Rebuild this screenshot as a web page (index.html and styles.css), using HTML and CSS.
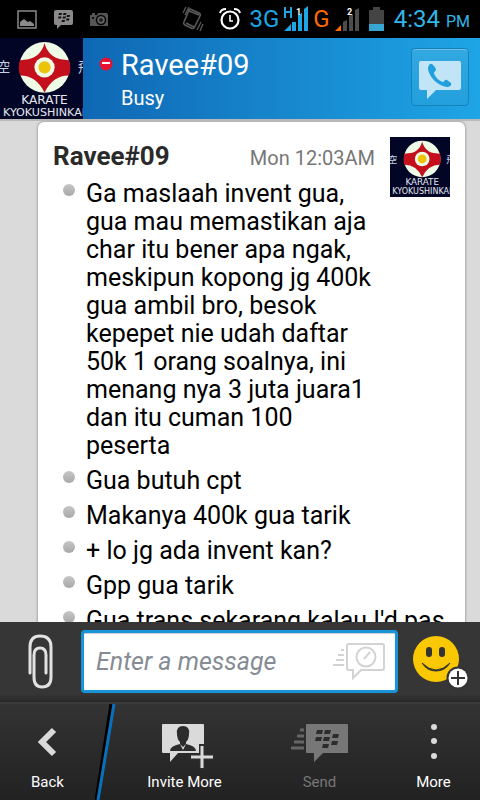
FILE: index.html
```html
<!DOCTYPE html>
<html lang="id">
<head>
    <meta charset="UTF-8">
    <meta name="viewport" content="width=device-width, initial-scale=1.0">
    <title>Ravee#09</title>
    <link rel="stylesheet" href="styles.css">
</head>
<body>
    <!-- avatar, used in the header and in the chat -->
    <svg class="defs" width="0" height="0" aria-hidden="true">
        <symbol id="avatar" viewBox="0 0 82 82" preserveAspectRatio="xMidYMid slice">
            <rect width="82" height="82" fill="#030527"/>
            <circle cx="44" cy="30" r="25" fill="#eefbe6"/>
            <path d="M44 6C46 15 53 21 60 22L68 23Q71 30 68 38Q52 38 44 55Q36 38 20 38Q17 30 20 23L28 22C35 21 42 15 44 6Z" fill="#c4101c"/>
            <circle cx="44" cy="30" r="10" fill="#eefbe6"/>
            <circle cx="44" cy="30" r="6" fill="#ecc308"/>
            <text class="kanji" x="-3" y="35">空</text>
            <text class="kanji" x="77" y="35">飛</text>
            <text class="mark" x="44" y="66" font-size="12" text-anchor="middle">KARATE</text>
            <text class="mark" x="3" y="78" font-size="11">KYOKUSHINKAI</text>
        </symbol>
    </svg>

    <div class="status-bar">
        <div class="status-left">
            <svg width="20" height="19" viewBox="0 0 20 19">
                <rect x="1" y="1" width="18" height="17" fill="none" stroke="#8b8989" stroke-width="1.5"/>
                <path d="M3 16V12L7 9L11 12L13 11L17 14V16Z" fill="#8b8989"/>
            </svg>
            <svg width="19" height="19" viewBox="0 0 19 19">
                <path d="M2 0H17Q19 0 19 2V13Q19 15 17 15H7L3 19V15H2Q0 15 0 13V2Q0 0 2 0Z" fill="#8b8989"/>
                <path d="M5 3h3l-.5 2h-3zM9.500 3h3l-.5 2h-3zM4.500 6.500h3l-.5 2h-3zM9 6.500h3l-.5 2h-3zM13 5h3l-.5 2h-3zM12.500 8.500h3l-.5 2h-3zM8 10h3l-.5 2h-3z" fill="#111"/>
            </svg>
            <svg width="18" height="19" viewBox="0 0 18 19">
                <path d="M0 5H2V3H5V5H7L8 3H17L18 5V16H0Z" fill="#555"/>
                <circle cx="11" cy="10" r="4.500" fill="#666" stroke="#050505" stroke-width="1.500"/>
                <circle cx="11" cy="10" r="2" fill="#222"/>
                <rect x="2" y="7" width="2" height="2" fill="#111"/>
            </svg>
        </div>
        <div class="status-right">
            <svg class="vibrate" width="22" height="26" viewBox="0 0 22 26" fill="none" stroke="#5a5a5a">
                <path d="M8 3L17 7Q19 8 18 10L12 22Q11 23 9 22L3 19Q1 18 2 16L7 4Q7 3 8 3ZM7 5L17 9M4 17L12 21" stroke-width="1.600"/>
                <path d="M4 1L1 7M7 1L3 9M19 16L15 24M21 18L18 25" stroke-width="1.300"/>
            </svg>
            <svg class="alarm" width="22" height="24" viewBox="0 0 22 24" fill="none" stroke="#fff">
                <circle cx="11" cy="13" r="8.500" stroke-width="2.200"/>
                <path d="M11 8V14H14" stroke-width="1.600"/>
                <path d="M1 6Q2 2 7 2M15 2Q20 2 21 6" stroke-width="2"/>
            </svg>
            <span class="net net-blue">3G</span>
            <svg class="signal" width="24" height="26" viewBox="0 0 24 26" fill="#1ea6e4">
                <path d="M0 26L7 19V26ZM8 17H12V26H8ZM14 10L18 8V26H14ZM20 4L24 1V26H20Z"/>
                <path d="M0 2H2V6H6V2H8V13H6V8H2V13H0Z"/>
                <text class="sim" x="12" y="10" font-size="9">1</text>
            </svg>
            <span class="net net-orange">G</span>
            <svg class="signal" width="24" height="26" viewBox="0 0 24 26">
                <path d="M0 26L6 20V26Z" fill="#ff6a00"/>
                <path d="M8 17L12 15V26H8ZM14 11L18 9V26H14ZM20 5L24 3V26H20Z" fill="#4d4d4d"/>
                <text class="sim" x="12" y="10" font-size="9">2</text>
            </svg>
            <svg class="battery" width="15" height="24" viewBox="0 0 15 24">
                <path d="M0 3H4V0H11V3H15V24H0Z" fill="#444"/>
                <rect y="17" width="15" height="7" fill="#37a6d0"/>
            </svg>
            <span class="clock">4:34 <small>PM</small></span>
        </div>
    </div>

    <header class="header">
        <svg class="header-avatar"><use href="#avatar"/></svg>
        <svg class="busy" width="14" height="14" viewBox="0 0 14 14">
            <circle cx="7" cy="7" r="6.500" fill="#e5132f"/>
            <rect x="3" y="5" width="8" height="2" fill="#fff"/>
        </svg>
        <div class="contact">
            <h1>Ravee#09</h1>
            <p>Busy</p>
        </div>
        <button class="call-btn" aria-label="Call">
            <svg width="42" height="38" viewBox="0 0 42 38">
                <path d="M2 0H40Q42 0 42 2V27Q42 29 40 29H17L8 38V29H2Q0 29 0 27V2Q0 0 2 0Z" fill="#c1e5f7"/>
                <path d="M11 3C13 2 15 5 17 8C17 10 15 11 15 12C16 16 20 20 24 21C26 20 26 18 28 19L32 22C33 24 31 26 28 26C19 25 10 16 9 8C9 5 10 4 11 3Z" fill="#229fdd"/>
            </svg>
        </button>
    </header>

    <main class="chat">
        <article class="bubble">
            <div class="bubble-head">
                <h2>Ravee#09</h2>
                <time>Mon 12:03AM</time>
                <svg class="bubble-avatar"><use href="#avatar"/></svg>
            </div>
            <ul class="messages">
                <li class="narrow">Ga maslaah invent gua, gua mau memastikan aja char itu bener apa ngak, meskipun kopong jg 400k gua ambil bro, besok kepepet nie udah daftar 50k 1 orang soalnya, ini menang nya 3 juta juara1 dan itu cuman 100 peserta</li>
                <li>Gua butuh cpt</li>
                <li>Makanya 400k gua tarik</li>
                <li>+ lo jg ada invent kan?</li>
                <li>Gpp gua tarik</li>
                <li>Gua trans sekarang kalau I'd pas</li>
            </ul>
        </article>
    </main>

    <form class="composer">
        <button type="button" class="attach" aria-label="Attach">
            <svg width="26" height="56" viewBox="0 0 26 56" fill="none" stroke="#e2e2e2" stroke-width="3" stroke-linecap="round">
                <path d="M3 39V13Q3 2 13 2Q24 2 24 13V43Q24 53 15 53Q7 53 7 43V21Q7 14 13 14Q19 14 19 21V39"/>
            </svg>
        </button>
        <div class="field">
            <input type="text" placeholder="Enter a message" aria-label="Message">
            <button type="button" class="timer" aria-label="Timed message">
                <svg width="52" height="37" viewBox="0 0 52 37" fill="none" stroke="#d3d3d3" stroke-width="2">
                    <path d="M16 1H49Q51 1 51 3V25Q51 27 49 27H28L20 35V27H16Q14 27 14 25V3Q14 1 16 1Z"/>
                    <circle cx="33" cy="14" r="9.500"/>
                    <path d="M31 16L37 9M8 7H11M5 12H11M3 17H11M0 22H11"/>
                </svg>
            </button>
        </div>
        <button type="button" class="smiley" aria-label="Smileys">
            <svg width="56" height="56" viewBox="0 0 56 56">
                <circle cx="24" cy="25" r="23" fill="#fac800"/>
                <rect x="14" y="13" width="6" height="10" rx="3" fill="#333"/>
                <rect x="27" y="13" width="6" height="10" rx="3" fill="#333"/>
                <path d="M10 29Q24 43 38 29Q33 37 24 37Q15 37 10 29Z" fill="#333" stroke="#333"/>
                <circle cx="46" cy="44" r="11.500" fill="#333"/>
                <circle cx="46" cy="44" r="9.500" fill="#fff"/>
                <path d="M46 37V51M39 44H53" stroke="#333" stroke-width="2"/>
            </svg>
        </button>
    </form>

    <nav class="actions">
        <button class="back">
            <svg width="52" height="40" viewBox="0 0 52 40">
                <path d="M32 6L20 18L32 30" fill="none" stroke="#dadada" stroke-width="6"/>
            </svg>
            Back
        </button>
        <svg class="divider" width="22" height="96" viewBox="0 0 22 96">
            <path d="M16 0L1 96" stroke="#000" stroke-width="3"/>
            <path d="M19 0L3 96" stroke="#0871bd" stroke-width="3"/>
        </svg>
        <button class="invite">
            <svg width="58" height="46" viewBox="-6 0 58 46">
                <path d="M1 0H41Q42 0 42 1V29H16L8 38V29H1Q0 29 0 28V1Q0 0 1 0Z" fill="#dadada"/>
                <path d="M15 10Q14 2 21 2Q28 2 27 10Q27 15 24 18V20Q34 22 34 27H8Q8 22 18 20V18Q15 15 15 10Z" fill="#2c2c2c"/>
                <path d="M18 20L21 23L24 20L21 26Z" fill="#dadada"/>
                <path d="M40 20V46M27 33H52" stroke="#2d2d2d" stroke-width="6"/>
                <path d="M40 22V44M29 33H51" stroke="#dadada" stroke-width="3"/>
            </svg>
            Invite More
        </button>
        <button class="send" disabled>
            <svg width="57" height="46" viewBox="0 0 57 46">
                <path d="M16 0H56Q57 0 57 1V29H32L23 38V29H16Q15 29 15 28V1Q15 0 16 0Z" fill="#777"/>
                <path d="M26 6h6l-1 4h-6zM34 6h6l-1 4h-6zM25 13h6l-1 4h-6zM33 13h6l-1 4h-6zM42 10h6l-1 4h-6zM41 17h6l-1 4h-6zM32 20h6l-1 4h-6z" fill="#2c2c2c"/>
                <path d="M9 6H13M6 12H13M3 18H13M0 24H13" stroke="#666" stroke-width="3"/>
            </svg>
            Send
        </button>
        <button class="more">
            <svg width="20" height="46" viewBox="0 0 20 46" fill="#dadada">
                <circle cx="10" cy="3" r="3"/>
                <circle cx="10" cy="17" r="3"/>
                <circle cx="10" cy="32" r="3"/>
            </svg>
            More
        </button>
    </nav>
</body>
</html>
```

FILE: styles.css
```css
* {
    box-sizing: border-box;
}
body {
    margin: 0;
    height: 100vh;
    display: flex;
    flex-direction: column;
    overflow: hidden;
    font-family: Roboto, sans-serif;
    background: #dadada;
}
h1, h2, p, ul {
    margin: 0;
    padding: 0;
    font-weight: normal;
}
button {
    padding: 0;
    border: none;
    background: none;
    font-family: inherit;
}
svg {
    display: block;
    flex: none;
}
.defs {
    display: none;
}
.kanji {
    font-family: "Noto Sans CJK JP", sans-serif;
    font-size: 13px;
    fill: #c8d2e0;
}
.mark {
    font-family: "DejaVu Sans", sans-serif;
    fill: #e4e8ee;
}

/* status bar */
.status-bar {
    flex: none;
    height: 38px;
    padding: 0 10px 0 17px;
    display: flex;
    align-items: center;
    justify-content: space-between;
    background: #000;
}
.status-left,
.status-right {
    display: flex;
    align-items: center;
}
.status-left {
    gap: 17px;
}
.status-right {
    gap: 5px;
}
.vibrate {
    margin-right: 10px;
}
.alarm {
    margin-right: 4px;
}
.signal {
    margin-bottom: 2px;
}
.sim {
    fill: #fff;
    font-weight: 700;
}
.net {
    font-size: 24px;
}
.net-blue {
    color: #1ea6e4;
}
.net-orange {
    color: #ff6a00;
}
.battery {
    margin: 0 5px;
}
.clock {
    color: #33b5e5;
    font-size: 24px;
    white-space: nowrap;
}
.clock small {
    font-size: 16px;
}

/* contact header */
.header {
    flex: none;
    height: 83px;
    padding-right: 11px;
    display: flex;
    align-items: flex-start;
    background: linear-gradient(to right, #0f67b4 17%, #1ea5e6);
    border-bottom: 2px solid #b9b9b9;
}
.header-avatar {
    width: 83px;
    height: 81px;
}
.busy {
    margin: 19px 8px 0 16px;
}
.contact {
    flex: 1;
    padding-top: 9px;
    color: #fff;
}
.contact h1 {
    font-size: 29px;
    line-height: 36px;
}
.contact p {
    font-size: 20px;
    line-height: 30px;
}
.call-btn {
    width: 58px;
    height: 58px;
    margin-top: 10px;
    padding-top: 6px;
    display: flex;
    align-items: center;
    justify-content: center;
    border: 1px solid #1582bd;
    border-radius: 4px;
    background: linear-gradient(#33a8e0, #229fdd);
    box-shadow: inset 0 1px #6cc0e8;
}

/* conversation */
.chat {
    flex: 1;
    min-height: 0;
    overflow: hidden;
    padding: 1px 15px 0 38px;
}
.bubble {
    min-height: 100%;
    padding: 15px;
    background: #fff;
    border-radius: 6px;
    box-shadow: 0 0 2px 1px #aaa;
}
.bubble-head {
    height: 43px;
    display: flex;
    align-items: flex-start;
}
.bubble-head h2 {
    flex: 1;
    color: #2a2a2a;
    font-size: 26px;
    font-weight: 700;
    line-height: 38px;
}
.bubble-head time {
    margin-right: 15px;
    color: #777;
    font-size: 20px;
    line-height: 42px;
}
.bubble-avatar {
    width: 60px;
    height: 60px;
}
.messages {
    list-style: none;
    color: #000;
    font-size: 25px;
    line-height: 28px;
}
.messages li {
    display: flex;
    margin-bottom: 7px;
}
.messages li::before {
    content: "";
    flex: none;
    width: 12px;
    height: 12px;
    margin: 4px 11px 0 10px;
    border-radius: 50%;
    background: linear-gradient(#c6c6c6, #a8a8a8);
}
.messages .narrow {
    padding-right: 75px;
}

/* message box */
.composer {
    flex: none;
    height: 80px;
    padding: 8px 12px 9px 27px;
    display: flex;
    align-items: center;
    background: linear-gradient(#363636 90%, #282828);
}
.field {
    flex: 1;
    min-width: 0;
    height: 63px;
    margin: 0 14px 0 28px;
    padding-right: 10px;
    display: flex;
    align-items: center;
    border: 3px solid #1895d8;
    border-radius: 4px;
    background: #fff;
    box-shadow: inset 0 1px 1px #ccc;
}
.field input {
    flex: 1;
    min-width: 0;
    padding: 0 0 0 12px;
    border: none;
    outline: none;
    background: none;
    font-family: inherit;
    font-size: 25px;
}
.field input::placeholder {
    color: #858b94;
    font-style: italic;
}

/* bottom actions */
.actions {
    flex: none;
    height: 98px;
    display: flex;
    border-top: 2px solid #3a3a3a;
    background: linear-gradient(#333, #222);
}
.actions button {
    padding-bottom: 9px;
    display: flex;
    flex-direction: column;
    align-items: center;
    justify-content: flex-end;
    gap: 3px;
    color: #fff;
    font-size: 15px;
    line-height: 18px;
}
.actions .back {
    flex: 95;
    gap: 9px;
}
.actions .invite {
    flex: 135;
}
.actions .send {
    flex: 135;
    color: #777;
}
.actions .more {
    flex: 93;
}
```
